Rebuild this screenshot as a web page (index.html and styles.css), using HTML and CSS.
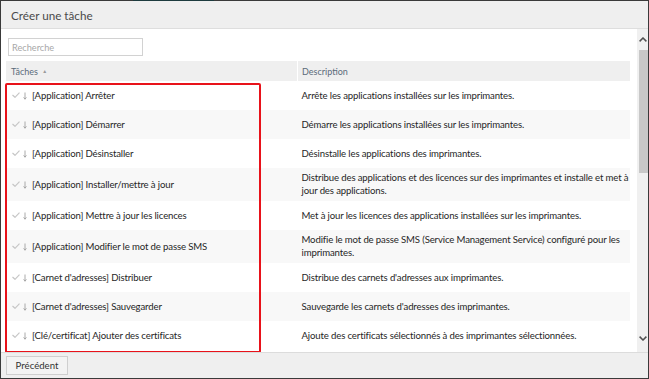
FILE: index.html
```html
<!DOCTYPE html>
<html lang="fr">
<head>
  <meta charset="UTF-8">
  <meta name="viewport" content="width=device-width, initial-scale=1.0">
  <link rel="stylesheet" href="styles.css">
</head>
<body>
  <div class="dialog">
    <div class="dialog-title">Créer une tâche</div>

    <div class="dialog-body">
      <div class="pane">
        <input class="search" type="text" placeholder="Recherche">

        <table class="tasks">
          <thead>
            <tr>
              <th class="col-task">Tâches <span class="sort">&#9650;</span></th>
              <th class="col-desc">Description</th>
            </tr>
          </thead>
          <tbody>
            <tr>
              <td class="task"><span class="check"><svg width="8" height="6" viewBox="0 0 8 6"><path d="M0.5 3 L3 5.3 L7.5 0.6"/></svg></span><span class="move"><svg width="4" height="8" viewBox="0 0 4 8"><path d="M2 0.5 V7.2 M0.6 5.4 L2 7.2 L3.4 5.4"/></svg></span>[Application] Arrêter</td>
              <td class="desc">Arrête les applications installées sur les imprimantes.</td>
            </tr>
            <tr>
              <td class="task"><span class="check"><svg width="8" height="6" viewBox="0 0 8 6"><path d="M0.5 3 L3 5.3 L7.5 0.6"/></svg></span><span class="move"><svg width="4" height="8" viewBox="0 0 4 8"><path d="M2 0.5 V7.2 M0.6 5.4 L2 7.2 L3.4 5.4"/></svg></span>[Application] Démarrer</td>
              <td class="desc">Démarre les applications installées sur les imprimantes.</td>
            </tr>
            <tr>
              <td class="task"><span class="check"><svg width="8" height="6" viewBox="0 0 8 6"><path d="M0.5 3 L3 5.3 L7.5 0.6"/></svg></span><span class="move"><svg width="4" height="8" viewBox="0 0 4 8"><path d="M2 0.5 V7.2 M0.6 5.4 L2 7.2 L3.4 5.4"/></svg></span>[Application] Désinstaller</td>
              <td class="desc">Désinstalle les applications des imprimantes.</td>
            </tr>
            <tr>
              <td class="task"><span class="check"><svg width="8" height="6" viewBox="0 0 8 6"><path d="M0.5 3 L3 5.3 L7.5 0.6"/></svg></span><span class="move"><svg width="4" height="8" viewBox="0 0 4 8"><path d="M2 0.5 V7.2 M0.6 5.4 L2 7.2 L3.4 5.4"/></svg></span>[Application] Installer/mettre à jour</td>
              <td class="desc">Distribue des applications et des licences sur des imprimantes et installe et met à jour des applications.</td>
            </tr>
            <tr>
              <td class="task"><span class="check"><svg width="8" height="6" viewBox="0 0 8 6"><path d="M0.5 3 L3 5.3 L7.5 0.6"/></svg></span><span class="move"><svg width="4" height="8" viewBox="0 0 4 8"><path d="M2 0.5 V7.2 M0.6 5.4 L2 7.2 L3.4 5.4"/></svg></span>[Application] Mettre à jour les licences</td>
              <td class="desc">Met à jour les licences des applications installées sur les imprimantes.</td>
            </tr>
            <tr>
              <td class="task"><span class="check"><svg width="8" height="6" viewBox="0 0 8 6"><path d="M0.5 3 L3 5.3 L7.5 0.6"/></svg></span><span class="move"><svg width="4" height="8" viewBox="0 0 4 8"><path d="M2 0.5 V7.2 M0.6 5.4 L2 7.2 L3.4 5.4"/></svg></span>[Application] Modifier le mot de passe SMS</td>
              <td class="desc">Modifie le mot de passe SMS (Service Management Service) configuré pour les imprimantes.</td>
            </tr>
            <tr>
              <td class="task"><span class="check"><svg width="8" height="6" viewBox="0 0 8 6"><path d="M0.5 3 L3 5.3 L7.5 0.6"/></svg></span><span class="move"><svg width="4" height="8" viewBox="0 0 4 8"><path d="M2 0.5 V7.2 M0.6 5.4 L2 7.2 L3.4 5.4"/></svg></span>[Carnet d'adresses] Distribuer</td>
              <td class="desc">Distribue des carnets d'adresses aux imprimantes.</td>
            </tr>
            <tr>
              <td class="task"><span class="check"><svg width="8" height="6" viewBox="0 0 8 6"><path d="M0.5 3 L3 5.3 L7.5 0.6"/></svg></span><span class="move"><svg width="4" height="8" viewBox="0 0 4 8"><path d="M2 0.5 V7.2 M0.6 5.4 L2 7.2 L3.4 5.4"/></svg></span>[Carnet d'adresses] Sauvegarder</td>
              <td class="desc">Sauvegarde les carnets d'adresses des imprimantes.</td>
            </tr>
            <tr>
              <td class="task"><span class="check"><svg width="8" height="6" viewBox="0 0 8 6"><path d="M0.5 3 L3 5.3 L7.5 0.6"/></svg></span><span class="move"><svg width="4" height="8" viewBox="0 0 4 8"><path d="M2 0.5 V7.2 M0.6 5.4 L2 7.2 L3.4 5.4"/></svg></span>[Clé/certificat] Ajouter des certificats</td>
              <td class="desc">Ajoute des certificats sélectionnés à des imprimantes sélectionnées.</td>
            </tr>
          </tbody>
        </table>

        <!-- red selection frame drawn over the task column -->
        <div class="highlight"></div>
      </div>

      <div class="scrollbar">
        <span class="scroll-btn up"><svg width="8" height="5" viewBox="0 0 8 5"><path d="M0.6 4.4 L4 1 L7.4 4.4"/></svg></span>
        <div class="thumb"></div>
        <span class="scroll-btn down"><svg width="8" height="5" viewBox="0 0 8 5"><path d="M0.6 0.6 L4 4 L7.4 0.6"/></svg></span>
      </div>
    </div>

    <div class="dialog-footer">
      <button class="btn">Précédent</button>
    </div>
  </div>
</body>
</html>
```

FILE: styles.css
```css
body {
  margin: 0;
  font-family: 'Lato', 'Open Sans', sans-serif;
  background-color: #ffffff;
  overflow: hidden;
}

.dialog {
  position: relative;
  width: 649px;
  height: 379px;
  box-sizing: border-box;
  border: 1px solid #3a3a3a;
  display: flex;
  flex-direction: column;
  background-color: #ffffff;
}

/* dark strip from the window behind */
.dialog::before {
  content: '';
  position: absolute;
  top: -1px;
  left: 132px;
  width: 81px;
  height: 1px;
  background-color: #1d3b3e;
}

.dialog-title {
  height: 27px;
  flex: none;
  display: flex;
  align-items: center;
  padding-left: 10px;
  background-color: #efefef;
  border-bottom: 1px solid #dedede;
  color: #4a4a4a;
  font-size: 11.7px;
}

.dialog-body {
  flex: 1;
  display: flex;
  min-height: 0;
}

.pane {
  position: relative;
  flex: 1;
  overflow: hidden;
  padding: 9px 6px 0 5px;
}

.search {
  display: block;
  box-sizing: border-box;
  width: 135px;
  height: 18px;
  margin: 0 0 5px 2px;
  padding: 0 3px;
  border: 1px solid #d2d2d2;
  font-family: inherit;
  font-size: 9.2px;
  color: #333;
  outline: none;
}

.search::placeholder {
  color: #a8a8a8;
}

.tasks {
  width: 624px;
  border-collapse: collapse;
  table-layout: fixed;
  font-size: 9.6px;
  letter-spacing: -0.14px;
  color: #262626;
}

.tasks th {
  height: 20px;
  padding: 0 0 0 5px;
  background-color: #efefef;
  color: #5b6b7a;
  font-weight: normal;
  font-size: 9px;
  letter-spacing: 0;
  text-align: left;
}

.tasks .col-task {
  width: 286px;
  border-right: 1px solid #ffffff;
}

.tasks .col-desc {
  padding-left: 4px;
}

.sort {
  display: inline-block;
  margin-left: 2px;
  font-size: 5px;
  color: #9a9a9a;
  vertical-align: 2px;
}

.tasks td {
  height: 29px;
  box-sizing: border-box;
  padding: 3px 0 4px 4px;
  line-height: 13px;
  vertical-align: middle;
}

.tasks tbody tr:nth-child(even) td {
  background-color: #f8f8f8;
}

.tasks td.task {
  padding-left: 6px;
  white-space: nowrap;
}

.check {
  display: inline-block;
  width: 8px;
  margin-right: 3px;
  vertical-align: 1px;
}

.check path {
  fill: none;
  stroke: #c6c6c6;
  stroke-width: 1.2;
}

.move {
  display: inline-block;
  width: 4px;
  margin-right: 5px;
  vertical-align: -1px;
}

.move path {
  fill: none;
  stroke: #a0a0a0;
  stroke-width: 0.9;
}

.check svg,
.move svg,
.scroll-btn svg {
  display: block;
}

.highlight {
  position: absolute;
  left: 4px;
  top: 54px;
  width: 256px;
  height: 270px;
  box-sizing: border-box;
  border: 2px solid #e8121a;
  border-radius: 2px;
}

.scrollbar {
  width: 11px;
  flex: none;
  display: flex;
  flex-direction: column;
  align-items: flex-end;
  background-color: #f0f0f0;
}

.scroll-btn {
  width: 11px;
  display: flex;
  justify-content: center;
}

.scroll-btn path {
  fill: none;
  stroke: #505050;
  stroke-width: 1.5;
}

.scroll-btn.up {
  height: 21px;
  align-items: center;
}

.scroll-btn.down {
  margin-top: auto;
  height: 22px;
  align-items: flex-start;
}

.scroll-btn.down svg {
  margin-top: 6px;
}

.thumb {
  width: 9px;
  height: 123px;
  background-color: #c8c8c8;
}

.dialog-footer {
  height: 25px;
  flex: none;
  display: flex;
  align-items: center;
  padding-left: 5px;
  background-color: #efefef;
  border-top: 1px solid #dcdcdc;
}

.btn {
  width: 62px;
  height: 19px;
  padding: 0;
  border: 1px solid #cfcfcf;
  background-color: #f3f3f3;
  font-family: inherit;
  font-size: 9.6px;
  color: #333;
}
```
